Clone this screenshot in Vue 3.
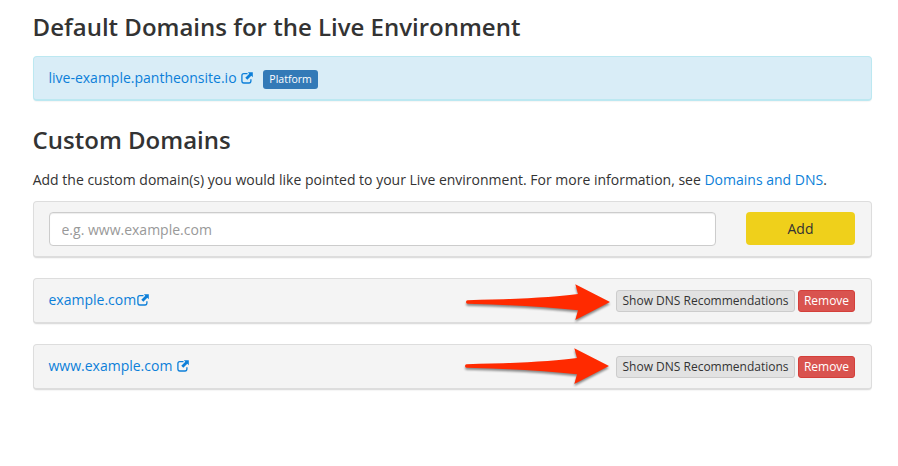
<script setup>
import { h } from 'vue'

const domains = [
  { name: 'example.com', tight: true },
  { name: 'www.example.com', tight: false },
]

const ExternalIcon = () =>
  h('svg', { class: 'external', viewBox: '0 0 12 12', width: 12, height: 12, fill: 'none', 'aria-hidden': 'true' }, [
    h('path', { d: 'M6.500 1.700H2.800Q.9 1.700.9 3.600v5.500q0 1.900 1.900 1.900H8q1.900 0 1.900-1.900V7.200', stroke: 'currentColor', 'stroke-width': 1.3 }),
    h('path', { d: 'M6.800 .3h5v5L10.300 3.800 6.300 7.800 4.300 5.800l4-4z', fill: 'currentColor' }),
  ])
</script>

<template>
  <main class="page">
    <h2 class="title">Default Domains for the Live Environment</h2>
    <section class="panel info">
      <a class="link">live-example.pantheonsite.io<ExternalIcon class="external spaced" /></a>
      <span class="label">Platform</span>
    </section>

    <h2 class="title custom">Custom Domains</h2>
    <p class="intro">
      Add the custom domain(s) you would like pointed to your Live environment. For more information, see
      <a class="link">Domains and DNS</a>.
    </p>

    <section class="panel add">
      <input class="field" type="text" placeholder="e.g. www.example.com" />
      <button class="add-button" type="button">Add</button>
    </section>

    <section v-for="domain in domains" :key="domain.name" class="panel row">
      <a class="link row-link">{{ domain.name }}<ExternalIcon class="external" :class="{ spaced: !domain.tight }" /></a>
      <div class="actions">
        <button class="small" type="button">Show DNS Recommendations</button>
        <button class="small danger" type="button">Remove</button>
      </div>
      <svg class="arrow" :class="{ raised: !domain.tight }" viewBox="0 0 150 46" width="150" height="46" aria-hidden="true">
        <path d="M4.500 20.200Q3 20.400 3 22t1.500 1.800Q72 25.500 115 30.300L112.300 40 147 22 112.300 4.300 115 14Q85 18.500 4.500 20.200Z" />
      </svg>
    </section>
  </main>
</template>

<style>
body {
  background: #fff;
}
</style>

<style scoped>
.page {
  box-sizing: border-box;
  width: 898px;
  height: 466px;
  padding: 10px 26px 0 33px;
  overflow: hidden;
  color: #333;
  font-family: "Open Sans", "Noto Sans", sans-serif;
  font-size: 14px;
  line-height: 20px;
}
.title {
  margin: 0 0 0 -0.4px;
  font-size: 24px;
  font-weight: 600;
  line-height: 33px;
  white-space: nowrap;
}
.custom {
  margin-top: 22px;
}
.panel {
  position: relative;
  display: flex;
  align-items: center;
  box-sizing: border-box;
  width: 839px;
  border: 1px solid #ddd;
  border-bottom-width: 2px;
  border-radius: 4px;
  background: #f4f4f4;
  box-shadow: 0 1px 1px rgba(0, 0, 0, 0.04);
  padding: 0 16px 0 15px;
}
.info {
  height: 45px;
  margin-top: 13px;
  padding-left: 14.5px;
  border-color: #bce8f1;
  background: #d9edf7;
}
.link {
  color: #0c7fd9;
  text-decoration: none;
  white-space: nowrap;
}
.row-link {
  margin: 0 0 2px -0.5px;
}
.external {
  display: inline-block;
  margin-left: 0.5px;
  vertical-align: -1px;
}
.external.spaced {
  margin-left: 4.8px;
}
.label {
  box-sizing: border-box;
  width: 55px;
  height: 19px;
  margin: 2px 0 0 9.7px;
  border-radius: 3px;
  background: #337ab7;
  color: #fff;
  font-size: 10.5px;
  line-height: 18px;
  text-align: center;
}
.intro {
  margin: 14px 0 0 -0.3px;
  white-space: nowrap;
}
.add {
  height: 57px;
  margin-top: 11px;
  justify-content: space-between;
}
.field {
  box-sizing: border-box;
  width: 667px;
  height: 34px;
  padding: 1px 12px 0 11.5px;
  border: 1px solid #ccc;
  border-radius: 4px;
  background: #fff;
  box-shadow: inset 0 1px 1px rgba(0, 0, 0, 0.075);
  color: #555;
  font: 14px "Open Sans", sans-serif;
}
.field::placeholder {
  color: #999;
  opacity: 1;
}
.add-button {
  width: 109px;
  height: 33px;
  margin-bottom: 1px;
  padding: 0;
  border: 0;
  border-radius: 4px;
  background: #efd01b;
  color: #333;
  font: 14px "Open Sans", sans-serif;
}
.row {
  height: 46px;
  margin-top: 20px;
  justify-content: space-between;
}
.actions {
  display: flex;
  gap: 3px;
}
.small {
  box-sizing: border-box;
  width: 179px;
  height: 22px;
  padding: 0;
  border: 1px solid #ccc;
  border-radius: 3px;
  background: #e2e2e2;
  color: #333;
  font: 12px/18px "Open Sans", sans-serif;
  white-space: nowrap;
}
.danger {
  width: 57px;
  border-color: #d43f3a;
  background: #d9534f;
  color: #fff;
}
.arrow {
  position: absolute;
  top: 1px;
  left: 428.500px;
  fill: #ff2a00;
  filter: drop-shadow(0 2px 1px rgba(0, 0, 0, 0.45));
}
.arrow.raised {
  top: -1px;
  left: 428px;
}
</style>
